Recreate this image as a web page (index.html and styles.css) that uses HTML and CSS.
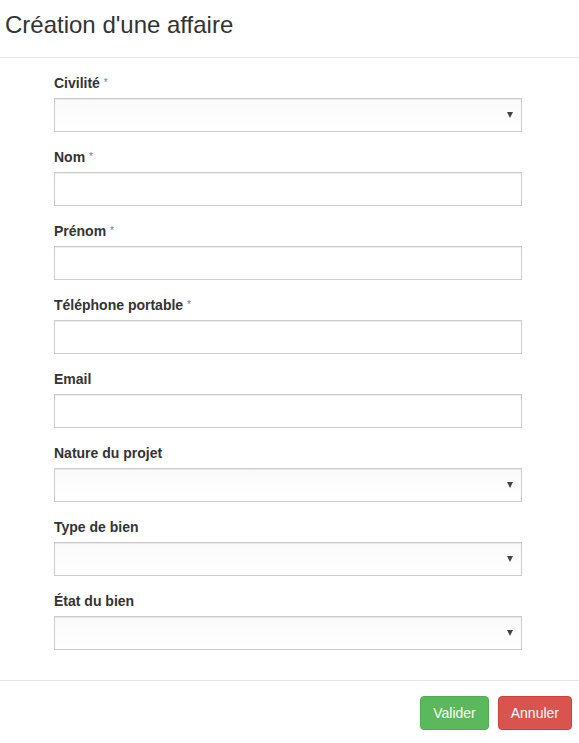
FILE: index.html
```html
<!DOCTYPE html>
<html lang="fr">
<head>
<meta charset="utf-8">
<title>Création d'une affaire</title>
<link rel="stylesheet" href="styles.css">
</head>
<body>
<div class="modal">
  <div class="modal-header">
    <h3 class="modal-title">Création d'une affaire</h3>
  </div>
  <div class="modal-body">
    <div class="form-group">
      <label class="label">Civilité <span class="req">*</span></label>
      <div class="control select"><span class="caret"></span></div>
    </div>
    <div class="form-group">
      <label class="label">Nom <span class="req">*</span></label>
      <div class="control"></div>
    </div>
    <div class="form-group">
      <label class="label">Prénom <span class="req">*</span></label>
      <div class="control"></div>
    </div>
    <div class="form-group">
      <label class="label">Téléphone portable <span class="req">*</span></label>
      <div class="control"></div>
    </div>
    <div class="form-group">
      <label class="label">Email</label>
      <div class="control"></div>
    </div>
    <div class="form-group">
      <label class="label">Nature du projet</label>
      <div class="control select"><span class="caret"></span></div>
    </div>
    <div class="form-group">
      <label class="label">Type de bien</label>
      <div class="control select"><span class="caret"></span></div>
    </div>
    <div class="form-group">
      <label class="label">État du bien</label>
      <div class="control select"><span class="caret"></span></div>
    </div>
  </div>
  <div class="modal-footer">
    <button class="btn btn-success">Valider</button>
    <button class="btn btn-danger">Annuler</button>
  </div>
</div>
</body>
</html>
```

FILE: styles.css
```css
html, body {
  margin: 0;
  padding: 0;
  background: #fff;
}
body {
  font-family: "Liberation Sans", Arial, Helvetica, sans-serif;
  font-size: 14px;
  color: #333;
}
.modal {
  width: 579px;
}
.modal-header {
  padding: 8px 5px 15px 5px;
  border-bottom: 1px solid #e5e5e5;
}
.modal-title {
  margin: 0;
  font-size: 24px;
  font-weight: normal;
  line-height: 34px;
  color: #333;
}
.modal-body {
  padding: 15px 57px 15px 54px;
}
.form-group {
  margin-bottom: 15px;
}
.label {
  display: block;
  font-weight: bold;
  line-height: 20px;
  margin-bottom: 5px;
  color: #333;
}
.req {
  font-size: 10px;
  font-weight: normal;
  color: #5b7fb3;
  vertical-align: 2px;
}
.control {
  box-sizing: border-box;
  height: 34px;
  border: 1px solid #ccc;
  background: #fff;
  box-shadow: inset 0 1px 1px rgba(0,0,0,0.075);
  position: relative;
}
.select {
  background: linear-gradient(#fafafa, #fff);
}
.caret {
  position: absolute;
  right: 8px;
  top: 13px;
  width: 0;
  height: 0;
  border-left: 3px solid transparent;
  border-right: 3px solid transparent;
  border-top: 6px solid #444;
}
.modal-footer {
  border-top: 1px solid #e5e5e5;
  padding: 15px 7px 15px 15px;
  display: flex;
  justify-content: flex-end;
  gap: 9px;
}
.btn {
  font-family: "Liberation Sans", Arial, Helvetica, sans-serif;
  font-size: 14px;
  line-height: 20px;
  padding: 6px 12px;
  border: 1px solid transparent;
  border-radius: 4px;
  color: #fff;
  margin: 0;
  cursor: pointer;
}
.btn-success {
  background: #5cb85c;
  border-color: #4cae4c;
}
.btn-danger {
  background: #d9534f;
  border-color: #d43f3a;
}
```
